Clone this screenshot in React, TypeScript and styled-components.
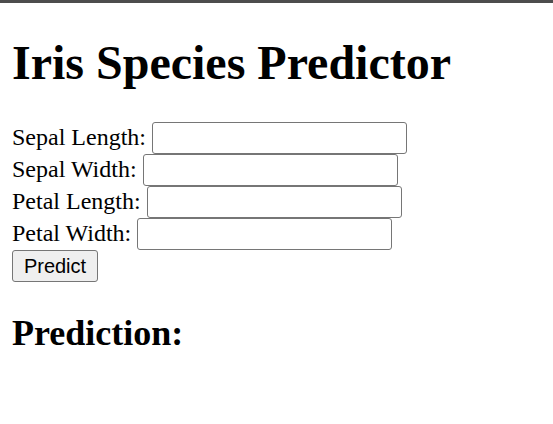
import React from "react";
import styled, { createGlobalStyle } from "styled-components";

const GlobalStyle = createGlobalStyle`
  html, body { margin: 0; padding: 0; background: #ffffff; }
  body { font-family: "Liberation Serif", "Times New Roman", serif; color: #000; }
`;

const TopBar = styled.div`
  height: 3px;
  background: #4d4d4d;
`;

const Page = styled.main`
  padding: 1px 12px 0;
`;

const Title = styled.h1`
  font-size: 48px;
  font-weight: bold;
  margin: 31px 0 32px;
`;

const Form = styled.form`
  font-size: 24px;
  margin: 0;
`;

const Label = styled.label`
  font-size: 24px;
`;

const Input = styled.input`
  box-sizing: border-box;
  width: 255px;
  height: 32px;
  border: 1px solid #767676;
  border-radius: 3px;
  padding: 1px 3px;
  font-size: 20px;
  font-family: "Liberation Sans", Arial, sans-serif;
  background: #fff;
  vertical-align: baseline;
  margin: 0;
`;

const Button = styled.button`
  box-sizing: border-box;
  width: 86px;
  height: 32px;
  padding: 1px 9px;
  border: 1px solid #767676;
  border-radius: 3px;
  background: #efefef;
  font-family: "Liberation Sans", Arial, sans-serif;
  font-size: 20px;
  color: #000;
  margin: 0;
`;

const Subtitle = styled.h2`
  font-size: 36px;
  font-weight: bold;
  margin: 30px 0;
`;

const fields = ["Sepal Length", "Sepal Width", "Petal Length", "Petal Width"];

export default function App() {
  return (
    <>
      <GlobalStyle />
      <TopBar />
      <Page>
        <Title>Iris Species Predictor</Title>
        <Form onSubmit={(e) => e.preventDefault()}>
          {fields.map((f) => (
            <React.Fragment key={f}>
              <Label>{f}:</Label> <Input type="text" />
              <br />
            </React.Fragment>
          ))}
          <Button type="submit">Predict</Button>
        </Form>
        <Subtitle>Prediction:</Subtitle>
      </Page>
    </>
  );
}
